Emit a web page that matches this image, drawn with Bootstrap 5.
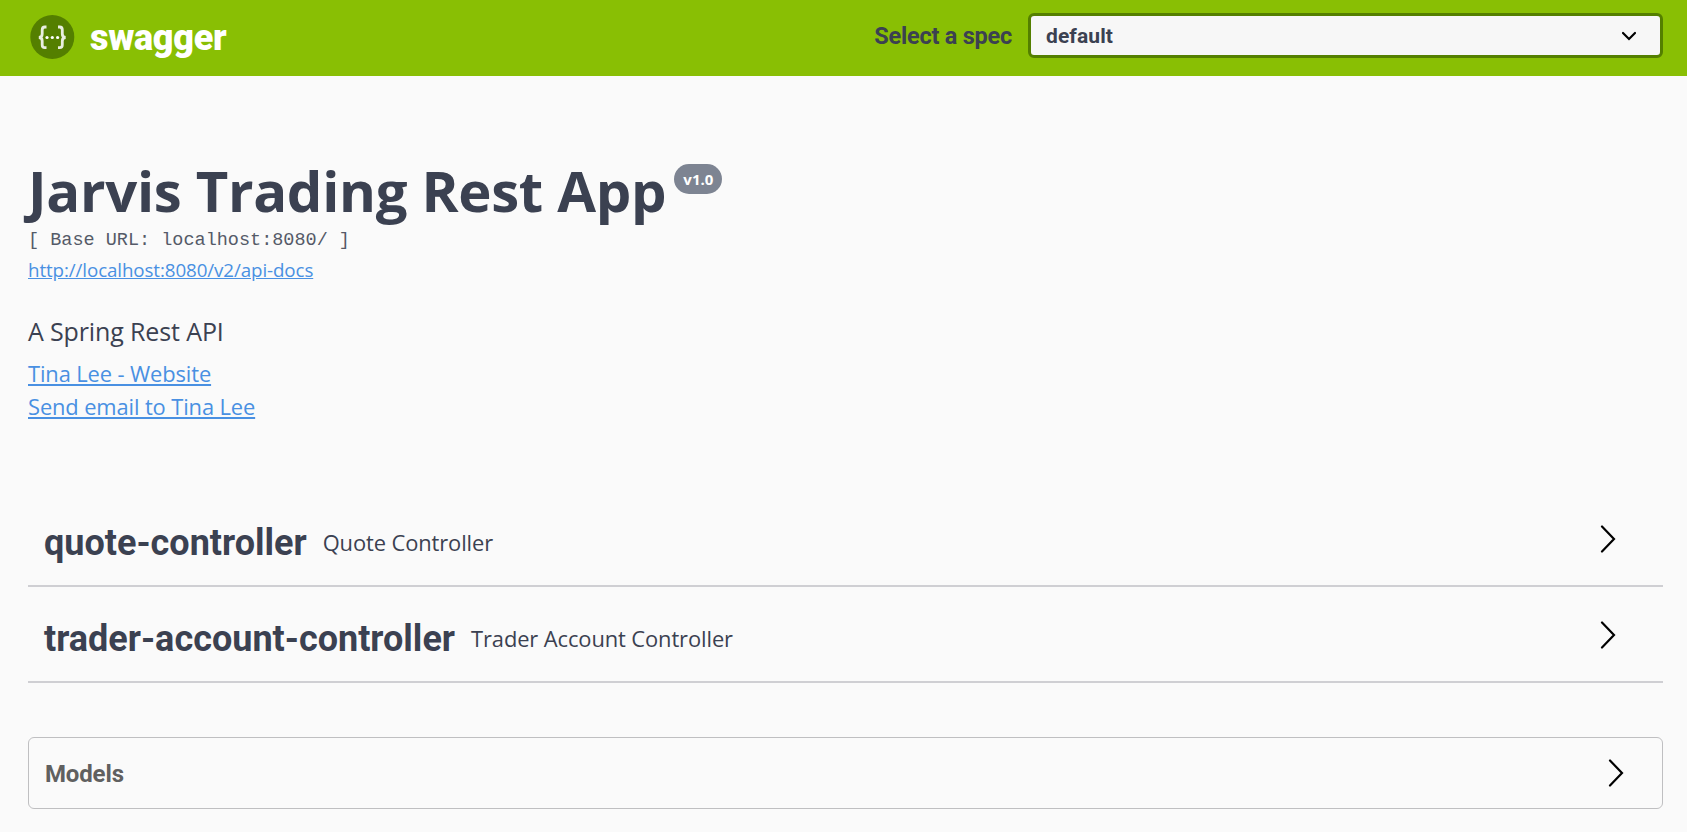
<!DOCTYPE html>
<html lang="en">
<head>
<meta charset="utf-8">
<title>Swagger UI</title>
<link href="https://cdn.jsdelivr.net/npm/bootstrap@5.3.0/dist/css/bootstrap.min.css" rel="stylesheet">
<style>
body{background:#fafafa;color:#3b4151;font-family:"Open Sans",sans-serif;overflow:hidden}
.hd{font-family:Roboto,sans-serif;font-weight:700;white-space:nowrap}
.topbar{background:#89bf04;height:76px;padding:0 24px 0 30px}
.brand{color:#fff;font-size:36px;font-weight:900;line-height:44px;letter-spacing:-.3px;margin-left:15px;margin-top:-1px}
.spec-label{font-size:23.5px;line-height:30px;letter-spacing:-.23px;margin-right:16px;margin-top:-4px}
.spec-select,.spec-select:focus{width:635px;height:45px;margin-top:-5px;border:3px solid #547f00;border-radius:6px;background-color:#f7f7f7;color:#3b4151;font-size:21px;letter-spacing:.1px;line-height:28px;padding:0 15px 0 15px;background-position:right 22px center;background-size:18px 18px;background-image:url("data:image/svg+xml,%3Csvg xmlns='http://www.w3.org/2000/svg' viewBox='0 0 18 18'%3E%3Cpath d='M3 6l6 6 6-6' fill='none' stroke='%23000' stroke-width='2.2' stroke-linecap='round'/%3E%3C/svg%3E")}
.page{padding:0 24px 0 28px}
.app-title{font-size:56.25px;font-weight:700;line-height:66px;letter-spacing:-.31px;margin:81px 0 0;white-space:nowrap}
.version{background:#7d8492;color:#fff;border-radius:15px;width:48px;height:30px;font-size:15px;font-weight:700;line-height:31px;margin:88px 0 0 8px;text-align:center}
.base-url{font-family:"Liberation Mono",monospace;font-size:18.5px;line-height:24px;margin-top:6px;white-space:pre;color:#555a68}
a{color:#4990e2}
.docs{font-size:18.75px;line-height:26px;letter-spacing:-.1px;margin-top:4px}
.descr{font-size:25px;line-height:34px;letter-spacing:-.13px;margin-top:31px}
.contact{font-size:21.9px;line-height:33px;letter-spacing:-.12px;margin-top:9px}
.sections{margin-top:68px}
.section-row{height:96px;border-bottom:2px solid #cfcfd3;padding:10px 47px 0 16px}
.section-row svg{margin-top:-8px}
.section-name{font-size:36px;line-height:44px;margin:0 16px 0 0}
.section-desc{font-size:21.9px;line-height:30px;letter-spacing:-.1px;margin-top:-1px}
.models{height:72px;border:1px solid #bfbfc1;border-radius:6px;margin-top:54px;padding:0 38px 0 16px}
.models .hd{font-size:24px;letter-spacing:-.15px;color:#606060;margin-top:2px}
</style>
</head>
<body>
<header class="topbar d-flex align-items-center">
  <svg width="45" height="46" viewBox="0 0 45 46"><circle cx="22.3" cy="22" r="22" fill="#547f00"/><g fill="none" stroke="#e8eee0" stroke-width="2.8"><path d="M16.500 12h-1.700q-2.600 0-2.600 3v4q0 3.500-3.400 3.500 3.400 0 3.400 3.500v4q0 2.700 2.600 2.700h1.700"/><path d="M28 12h1.700q2.600 0 2.600 3v4q0 3.500 3.400 3.500-3.400 0-3.400 3.500v4q0 2.700-2.600 2.700H28"/></g><g fill="#fff"><circle cx="17" cy="22.500" r="1.600"/><circle cx="22.300" cy="22.500" r="1.600"/><circle cx="27.600" cy="22.500" r="1.600"/></g></svg>
  <span class="hd brand">swagger</span>
  <label for="spec" class="hd spec-label ms-auto">Select a spec</label>
  <select id="spec" class="form-select hd spec-select"><option>default</option></select>
</header>
<main class="page">
  <div class="d-flex align-items-start"><h1 class="app-title">Jarvis Trading Rest App</h1><span class="version">v1.0</span></div>
  <div class="base-url">[ Base URL: localhost:8080/ ]</div>
  <div class="docs"><a href="#">http://localhost:8080/v2/api-docs</a></div>
  <div class="descr">A Spring Rest API</div>
  <div class="contact"><div><a href="#">Tina Lee - Website</a></div><div><a href="#">Send email to Tina Lee</a></div></div>
  <section class="sections">
    <div class="section-row d-flex align-items-center"><h2 class="hd section-name">quote-controller</h2><span class="section-desc">Quote Controller</span><svg class="ms-auto" width="16" height="28" viewBox="0 0 16 28"><path d="M2 1.500l12 12.500L2 26.500" fill="none" stroke="#000" stroke-width="2.200" stroke-linecap="round"/></svg></div>
    <div class="section-row d-flex align-items-center"><h2 class="hd section-name">trader-account-controller</h2><span class="section-desc">Trader Account Controller</span><svg class="ms-auto" width="16" height="28" viewBox="0 0 16 28"><path d="M2 1.500l12 12.500L2 26.500" fill="none" stroke="#000" stroke-width="2.200" stroke-linecap="round"/></svg></div>
  </section>
  <div class="models d-flex align-items-center"><span class="hd">Models</span><svg class="ms-auto" width="16" height="28" viewBox="0 0 16 28"><path d="M2 1.500l12 12.500L2 26.500" fill="none" stroke="#000" stroke-width="2.200" stroke-linecap="round"/></svg></div>
</main>
<script src="https://cdn.jsdelivr.net/npm/bootstrap@5.3.0/dist/js/bootstrap.bundle.min.js"></script>
</body>
</html>
